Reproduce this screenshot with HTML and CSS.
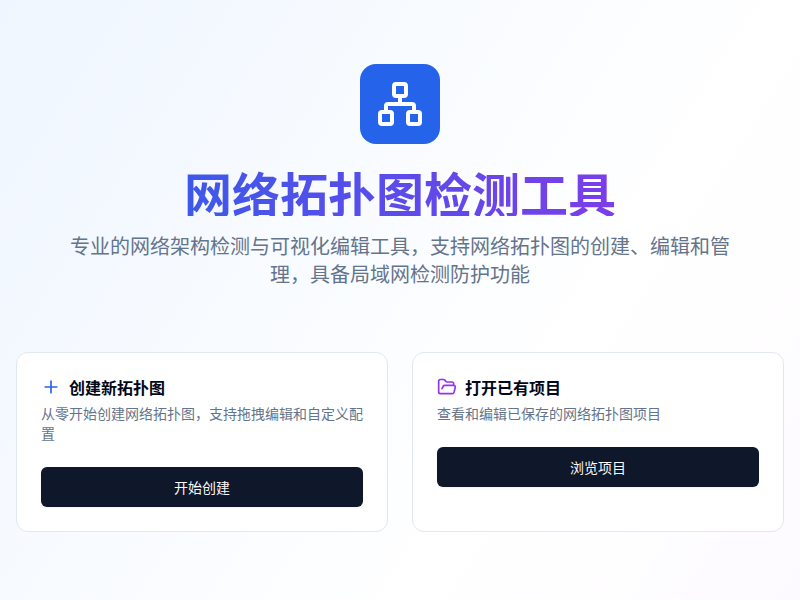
FILE: index.html
```html
<!DOCTYPE html>
<html lang="zh-CN">
<head>
<meta charset="utf-8">
<title>网络拓扑图检测工具</title>
<link rel="stylesheet" href="styles.css">
</head>
<body>
<main class="page">
  <div class="container">
    <header class="hero">
      <div class="logo">
        <svg class="icon" width="48" height="48" viewBox="0 0 24 24"><rect x="16" y="16" width="6" height="6" rx="1"/><rect x="2" y="16" width="6" height="6" rx="1"/><rect x="9" y="2" width="6" height="6" rx="1"/><path d="M5 16v-3a1 1 0 0 1 1-1h12a1 1 0 0 1 1 1v3"/><path d="M12 12V8"/></svg>
      </div>
      <h1 class="title">网络拓扑图检测工具</h1>
      <p class="subtitle">专业的网络架构检测与可视化编辑工具，支持网络拓扑图的创建、编辑和管理，具备局域网检测防护功能</p>
    </header>
    <section class="cards">
      <article class="card">
        <div class="card-header">
          <h2 class="card-title"><svg class="icon blue" width="20" height="20" viewBox="0 0 24 24"><path d="M5 12h14"/><path d="M12 5v14"/></svg>创建新拓扑图</h2>
          <p class="card-text">从零开始创建网络拓扑图，支持拖拽编辑和自定义配置</p>
        </div>
        <button class="button">开始创建</button>
      </article>
      <article class="card">
        <div class="card-header">
          <h2 class="card-title"><svg class="icon purple" width="20" height="20" viewBox="0 0 24 24"><path d="m6 14 1.5-2.9A2 2 0 0 1 9.24 10H20a2 2 0 0 1 1.94 2.5l-1.54 6a2 2 0 0 1-1.95 1.5H4a2 2 0 0 1-2-2V5a2 2 0 0 1 2-2h3.9a2 2 0 0 1 1.69.9l.81 1.2a2 2 0 0 0 1.67.9H18a2 2 0 0 1 2 2v2"/></svg>打开已有项目</h2>
          <p class="card-text">查看和编辑已保存的网络拓扑图项目</p>
        </div>
        <button class="button">浏览项目</button>
      </article>
    </section>
  </div>
</main>
</body>
</html>
```
FILE: styles.css
```css
* { box-sizing: border-box; margin: 0; }
body {
  font-family: "Noto Sans CJK SC", sans-serif;
  color: #020817;
}
.page {
  min-height: 100vh;
  background: linear-gradient(to bottom right, #eff6ff, #ffffff, #faf5ff) 0 0 / 100% 1240px;
}
.container { padding: 64px 16px; }
.hero { text-align: center; margin-bottom: 64px; }
.logo {
  display: flex;
  align-items: center;
  justify-content: center;
  width: 80px;
  height: 80px;
  margin: 0 auto 24px;
  border-radius: 16px;
  background: #2563eb;
  color: #fff;
}
.icon {
  flex: none;
  fill: none;
  stroke: currentColor;
  stroke-width: 2;
  stroke-linecap: round;
  stroke-linejoin: round;
}
.title {
  margin-bottom: 16px;
  font-size: 48px;
  line-height: 48px;
  font-weight: 700;
  background: linear-gradient(to right, #2563eb, #9333ea);
  background-clip: text;
  -webkit-background-clip: text;
  color: transparent;
}
.subtitle {
  max-width: 672px;
  margin: 0 auto;
  font-size: 20px;
  line-height: 28px;
  color: #64748b;
}
.cards { display: grid; grid-template-columns: 1fr 1fr; gap: 24px; }
.card {
  padding: 24px;
  border: 1px solid #e2e8f0;
  border-radius: 12px;
  background: #fff;
}
.card-header { margin-bottom: 24px; }
.card-title {
  display: flex;
  align-items: center;
  gap: 8px;
  margin-bottom: 6px;
  font-size: 16px;
  line-height: 20px;
  font-weight: 600;
}
.card-text { font-size: 14px; line-height: 20px; color: #64748b; }
.blue { color: #2563eb; }
.purple { color: #9333ea; }
.button {
  display: block;
  width: 100%;
  height: 40px;
  border: 0;
  border-radius: 6px;
  background: #0f172a;
  box-shadow: 0 1px 2px rgb(0 0 0 / 0.05);
  color: #f8fafc;
  font: 400 14px/20px "Noto Sans CJK SC", sans-serif;
}
```
